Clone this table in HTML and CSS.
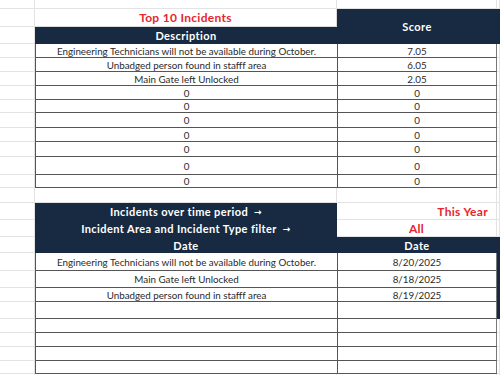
FILE: index.html
```html
<!DOCTYPE html>
<html>
<head>
<meta charset="utf-8">
<link rel="stylesheet" href="styles.css">
</head>
<body>
<div class="sheet">
  <!-- row 1 -->
  <div class="g"></div><div class="g"></div><div class="g"></div><div class="g"></div>
  <!-- row 2 -->
  <div class="g"></div>
  <div class="title">Top 10 Incidents</div>
  <div class="hd span2">Score</div>
  <div class="dk span2"></div>
  <!-- row 3 -->
  <div class="g"></div>
  <div class="hd">Description</div>
  <!-- rows 4-13 -->
  <div class="g"></div><div class="t b">Engineering Technicians will not be available during October.</div><div class="t c">7.05</div><div class="g"></div>
  <div class="g"></div><div class="t b">Unbadged person found in stafff area</div><div class="t c">6.05</div><div class="g"></div>
  <div class="g"></div><div class="t b">Main Gate left Unlocked</div><div class="t c">2.05</div><div class="g"></div>
  <div class="g"></div><div class="t b">0</div><div class="t c">0</div><div class="g"></div>
  <div class="g"></div><div class="t b">0</div><div class="t c">0</div><div class="g"></div>
  <div class="g"></div><div class="t b">0</div><div class="t c">0</div><div class="g"></div>
  <div class="g"></div><div class="t b">0</div><div class="t c">0</div><div class="g"></div>
  <div class="g"></div><div class="t b">0</div><div class="t c">0</div><div class="g"></div>
  <div class="g"></div><div class="t b">0</div><div class="t c">0</div><div class="g"></div>
  <div class="g"></div><div class="t b">0</div><div class="t c">0</div><div class="g"></div>
  <!-- row 14 -->
  <div class="g"></div><div class="g"></div><div class="g"></div><div class="g"></div>
  <!-- row 15 -->
  <div class="g"></div>
  <div class="hd">Incidents over time period <span class="arr">&#8594;</span></div>
  <div class="g red right">This Year</div>
  <div class="g"></div>
  <!-- row 16 -->
  <div class="g"></div>
  <div class="hd">Incident Area and Incident Type filter <span class="arr">&#8594;</span></div>
  <div class="g red">All</div>
  <div class="g"></div>
  <!-- row 17 -->
  <div class="g"></div>
  <div class="hd">Date</div>
  <div class="hd">Date</div>
  <div class="dk"></div>
  <!-- rows 18-25 -->
  <div class="g"></div><div class="t b">Engineering Technicians will not be available during October.</div><div class="t c">8/20/2025</div><div class="dk"></div>
  <div class="g"></div><div class="t b">Main Gate left Unlocked</div><div class="t c">8/18/2025</div><div class="dk"></div>
  <div class="g"></div><div class="t b">Unbadged person found in stafff area</div><div class="t c">8/19/2025</div><div class="dk"></div>
  <div class="g"></div><div class="t b"></div><div class="t c"></div><div class="dk"></div>
  <div class="g"></div><div class="t b"></div><div class="t c"></div><div class="g"></div>
  <div class="g"></div><div class="t b"></div><div class="t c"></div><div class="g"></div>
  <div class="g"></div><div class="t b"></div><div class="t c"></div><div class="g"></div>
  <div class="g"></div><div class="t b"></div><div class="t c"></div><div class="g"></div>
  <!-- row 26 -->
  <div class="g"></div><div class="g"></div><div class="g"></div><div class="g"></div>
</div>
</body>
</html>
```

FILE: styles.css
```css
html, body {
  margin: 0;
  padding: 0;
  background: #ffffff;
}

.sheet {
  width: 500px;
  height: 375px;
  overflow: hidden;
  display: grid;
  grid-template-columns: 35px 302px 160px 1fr;
  grid-template-rows: 9px 18px 17px 14px 14px 14px 14px 13px 15px 14px 15px 18px 13px 15px 17px 17px 16px 18px 17px 14px 17px 14px 14px 14px 13px 20px;
  font-family: Lato, "Liberation Sans", sans-serif;
  color: #333333;
}

.sheet > div {
  box-sizing: border-box;
  min-width: 0;
  white-space: nowrap;
}

.g {
  border-bottom: 1px solid #e3e3e3;
  border-right: 1px solid #e3e3e3;
}

.title {
  border-bottom: 1px solid #d9d9d9;
  border-right: 1px solid #d9d9d9;
  display: flex;
  align-items: center;
  justify-content: center;
  color: #e8262c;
  font-weight: 700;
  font-size: 12px;
  letter-spacing: 0.3px;
}

.hd {
  background: #172a42;
  color: #ffffff;
  font-weight: 700;
  font-size: 11px;
  letter-spacing: 0.4px;
  display: flex;
  align-items: center;
  justify-content: center;
}

.span2 {
  grid-row: span 2;
}

.dk {
  background: #172a42;
}

.arr {
  font-family: "DejaVu Sans", sans-serif;
  font-size: 9px;
  font-weight: 700;
  margin-left: 6px;
}

.t {
  border-bottom: 1px solid #555555;
  display: flex;
  align-items: center;
  justify-content: center;
  font-size: 9.8px;
  color: #2a2a2a;
}

.t.b {
  border-left: 1px solid #555555;
}

.t.c {
  border-left: 1px solid #555555;
  border-right: 1px solid #777777;
}

.red {
  display: flex;
  align-items: center;
  justify-content: center;
  color: #e8262c;
  font-weight: 700;
  font-size: 12px;
  letter-spacing: 0.3px;
}

.red.right {
  justify-content: flex-end;
  padding-right: 8px;
}
```
